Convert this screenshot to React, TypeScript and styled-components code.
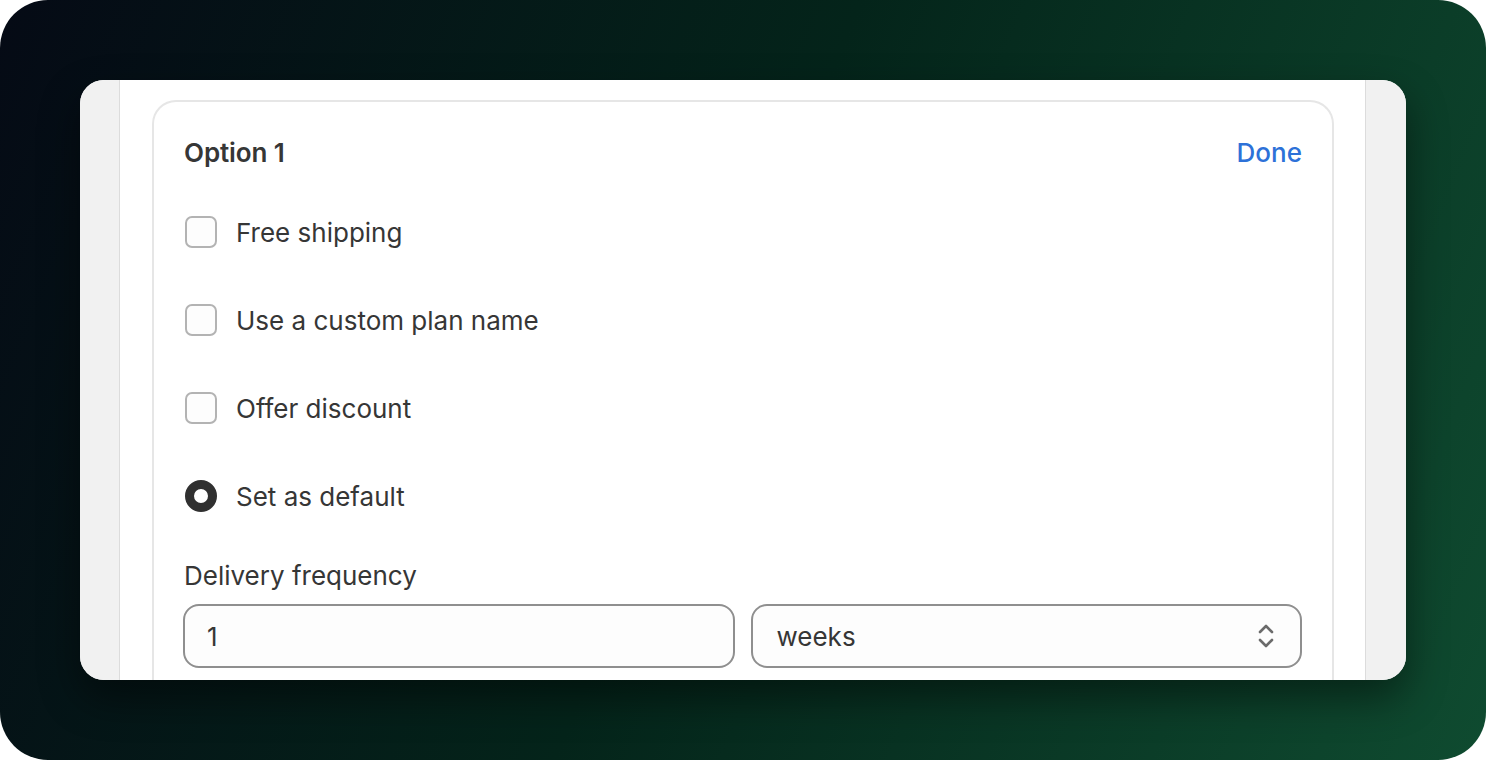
import React from 'react';
import styled, { createGlobalStyle } from 'styled-components';

const GlobalStyle = createGlobalStyle`
  html, body {
    margin: 0;
    padding: 0;
    background: #ffffff;
  }
  body {
    font-family: Inter, "Noto Sans", "Liberation Sans", sans-serif;
    color: #333333;
  }
`;

const Frame = styled.div`
  box-sizing: border-box;
  width: 1486px;
  height: 760px;
  padding: 80px;
  border-radius: 48px;
  background: linear-gradient(112deg, #050a15 0%, #04241a 48%, #0f4b30 100%);
  overflow: hidden;
`;

const Window = styled.div`
  display: grid;
  grid-template-columns: 40px 1fr 41px;
  height: 600px;
  border-radius: 24px;
  overflow: hidden;
  background: #ffffff;
  box-shadow: 0 18px 40px rgba(0, 0, 0, 0.45);
`;

const Gutter = styled.div<{ side: 'left' | 'right' }>`
  background: #f1f1f1;
  ${({ side }) => (side === 'left' ? 'border-right: 1px solid #dcdcdc;' : 'border-left: 1px solid #dcdcdc;')}
`;

const Main = styled.main`
  padding: 20px 31px 0 32px;
  overflow: hidden;
`;

const Card = styled.section`
  border: 2px solid #e6e6e6;
  border-bottom: none;
  border-radius: 24px 24px 0 0;
  padding: 34px 30px 40px 29px;
  height: 700px;
`;

const CardHeader = styled.div`
  display: flex;
  justify-content: space-between;
  align-items: center;
  height: 32px;
  margin-bottom: 48px;
  padding-left: 1px;
`;

const Title = styled.h2`
  margin: 0;
  font-size: 26px;
  font-weight: 600;
  color: #363636;
  letter-spacing: -0.1px;
`;

const DoneLink = styled.a`
  font-size: 26px;
  font-weight: 450;
  color: #2d71d8;
  text-decoration: none;
  cursor: pointer;
`;

const OptionList = styled.div`
  display: flex;
  flex-direction: column;
  gap: 56px;
  padding-left: 2px;
`;

const OptionRow = styled.label`
  display: flex;
  align-items: center;
  gap: 19px;
  height: 32px;
  font-size: 26px;
  color: #363636;
  cursor: pointer;
`;

const CheckBox = styled.span`
  box-sizing: border-box;
  width: 32px;
  height: 32px;
  border: 2px solid #b3b3b3;
  border-radius: 7px;
  background: #fdfdfd;
  flex-shrink: 0;
`;

const Radio = styled.span`
  box-sizing: border-box;
  width: 32px;
  height: 32px;
  border: 9px solid #303030;
  border-radius: 50%;
  background: #ffffff;
  flex-shrink: 0;
`;

const FieldLabel = styled.div`
  margin-top: 48px;
  padding-left: 1px;
  height: 32px;
  line-height: 32px;
  font-size: 26px;
  color: #363636;
`;

const FieldRow = styled.div`
  display: grid;
  grid-template-columns: 1fr 1fr;
  gap: 16px;
  margin-top: 12px;
`;

const Field = styled.div`
  box-sizing: border-box;
  display: flex;
  align-items: center;
  justify-content: space-between;
  height: 64px;
  padding: 0 24px 0 22px;
  border: 2px solid #8f8f8f;
  border-radius: 16px;
  background: #fdfdfd;
  font-size: 26px;
  color: #363636;
`;

const SelectValue = styled.span`
  padding-left: 2px;
`;

const Chevrons = () => (
  <svg width="20" height="28" viewBox="0 0 20 28" fill="none">
    <path d="M4 10 L10 4 L16 10" stroke="#6b6b6b" strokeWidth="2.6" strokeLinecap="round" strokeLinejoin="round" />
    <path d="M4 18 L10 24 L16 18" stroke="#6b6b6b" strokeWidth="2.6" strokeLinecap="round" strokeLinejoin="round" />
  </svg>
);

const options = ['Free shipping', 'Use a custom plan name', 'Offer discount'];

const App: React.FC = () => (
  <>
    <GlobalStyle />
    <Frame>
      <Window>
        <Gutter side='left' />
        <Main>
          <Card>
            <CardHeader>
              <Title>Option 1</Title>
              <DoneLink>Done</DoneLink>
            </CardHeader>
            <OptionList>
              {options.map((label) => (
                <OptionRow key={label}>
                  <CheckBox />
                  {label}
                </OptionRow>
              ))}
              <OptionRow>
                <Radio />
                Set as default
              </OptionRow>
            </OptionList>
            <FieldLabel>Delivery frequency</FieldLabel>
            <FieldRow>
              <Field>1</Field>
              <Field>
                <SelectValue>weeks</SelectValue>
                <Chevrons />
              </Field>
            </FieldRow>
          </Card>
        </Main>
        <Gutter side='right' />
      </Window>
    </Frame>
  </>
);

export default App;
